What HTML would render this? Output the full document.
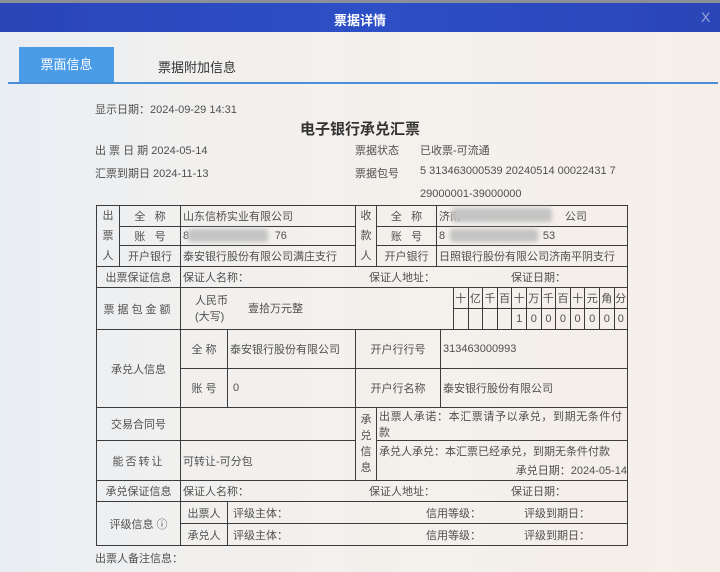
<!DOCTYPE html>
<html><head><meta charset="utf-8">
<style>
*{margin:0;padding:0;box-sizing:border-box}
body{width:720px;height:572px;overflow:hidden;position:relative;font-family:"Liberation Sans","Noto Sans CJK SC",sans-serif;font-size:11px;color:#505050;background:linear-gradient(90deg,#e9eef4 0%,#f2f0ee 30%,#f6efe9 100%)}
.a{position:absolute;white-space:nowrap}
.c{position:absolute;border:1px solid #3c3c3c;display:flex;align-items:center;white-space:nowrap;padding-left:2px}
.m{justify-content:center;padding-left:0}
.b{position:absolute;background:#c4c4c4;filter:blur(2px);border-radius:3px}
</style></head><body>
<div class="a" style="left:0;top:0;width:720px;height:3px;background:#8a8f9a"></div>
<div class="a" style="left:0;top:3px;width:720px;height:29px;background:linear-gradient(90deg,#2a45b8,#2d4fc6,#2a45b8)"></div>
<div class="a" style="left:0;top:10px;width:720px;text-align:center;color:#fff;font-weight:bold;font-size:13px">票据详情</div>
<div class="a" style="left:701px;top:9px;color:#9aa6d8;font-size:14px">X</div>

<div class="a" style="left:19px;top:47px;width:95px;height:35px;background:#4a9ce6;color:#fff;font-size:13px;text-align:center;line-height:35px">票面信息</div>
<div class="a" style="left:158px;top:57px;font-size:13px;color:#333">票据附加信息</div>
<div class="a" style="left:8px;top:82px;width:710px;height:2px;background:#4a8fd8"></div>

<div class="a" style="left:95px;top:101px">显示日期：2024-09-29 14:31</div>
<div class="a" style="left:0;top:118px;width:720px;text-align:center;font-size:15px;font-weight:bold;color:#333">电子银行承兑汇票</div>
<div class="a" style="left:95px;top:142px">出 票 日 期 2024-05-14</div>
<div class="a" style="left:95px;top:165px">汇票到期日 2024-11-13</div>
<div class="a" style="left:355px;top:142px">票据状态</div>
<div class="a" style="left:420px;top:142px">已收票-可流通</div>
<div class="a" style="left:355px;top:165px">票据包号</div>
<div class="a" style="left:420px;top:165px">5 313463000539 20240514 00022431 7</div>
<div class="a" style="left:420px;top:188px">29000001-39000000</div>

<div class="c m" style="left:96px;top:205px;width:24px;height:62px;flex-direction:column;line-height:20px">出<br>票<br>人</div>
<div class="c m" style="left:119px;top:205px;width:62px;height:22px">全&nbsp;&nbsp;&nbsp;称</div>
<div class="c m" style="left:119px;top:226px;width:62px;height:20px">账&nbsp;&nbsp;&nbsp;号</div>
<div class="c m" style="left:119px;top:245px;width:62px;height:22px">开户银行</div>
<div class="c" style="left:180px;top:205px;width:176px;height:22px">山东信桥实业有限公司</div>
<div class="c" style="left:180px;top:226px;width:176px;height:20px">8&nbsp;&nbsp;&nbsp;&nbsp;&nbsp;&nbsp;&nbsp;&nbsp;&nbsp;&nbsp;&nbsp;&nbsp;&nbsp;&nbsp;&nbsp;&nbsp;&nbsp;&nbsp;&nbsp;&nbsp;&nbsp;&nbsp;&nbsp;&nbsp;&nbsp;&nbsp;&nbsp;&nbsp;76</div>
<div class="c" style="left:180px;top:245px;width:176px;height:22px">泰安银行股份有限公司满庄支行</div>
<div class="c m" style="left:355px;top:205px;width:22px;height:62px;flex-direction:column;line-height:20px">收<br>款<br>人</div>
<div class="c m" style="left:376px;top:205px;width:61px;height:22px">全&nbsp;&nbsp;&nbsp;称</div>
<div class="c m" style="left:376px;top:226px;width:61px;height:20px">账&nbsp;&nbsp;&nbsp;号</div>
<div class="c m" style="left:376px;top:245px;width:61px;height:22px">开户银行</div>
<div class="c" style="left:436px;top:205px;width:192px;height:22px">济南&nbsp;&nbsp;&nbsp;&nbsp;&nbsp;&nbsp;&nbsp;&nbsp;&nbsp;&nbsp;&nbsp;&nbsp;&nbsp;&nbsp;&nbsp;&nbsp;&nbsp;&nbsp;&nbsp;&nbsp;&nbsp;&nbsp;&nbsp;&nbsp;&nbsp;&nbsp;&nbsp;&nbsp;&nbsp;&nbsp;&nbsp;&nbsp;&nbsp;&nbsp;公司</div>
<div class="c" style="left:436px;top:226px;width:192px;height:20px">8&nbsp;&nbsp;&nbsp;&nbsp;&nbsp;&nbsp;&nbsp;&nbsp;&nbsp;&nbsp;&nbsp;&nbsp;&nbsp;&nbsp;&nbsp;&nbsp;&nbsp;&nbsp;&nbsp;&nbsp;&nbsp;&nbsp;&nbsp;&nbsp;&nbsp;&nbsp;&nbsp;&nbsp;&nbsp;&nbsp;&nbsp;&nbsp;53</div>
<div class="c" style="left:436px;top:245px;width:192px;height:22px">日照银行股份有限公司济南平阴支行</div>
<div class="b" style="left:188px;top:229px;width:80px;height:13px"></div>
<div class="b" style="left:452px;top:208px;width:100px;height:14px"></div>
<div class="b" style="left:450px;top:229px;width:88px;height:13px"></div>

<div class="c m" style="left:96px;top:266px;width:85px;height:22px">出票保证信息</div>
<div class="c" style="left:180px;top:266px;width:448px;height:22px">保证人名称：<span style="position:absolute;left:188px">保证人地址：</span><span style="position:absolute;left:330px">保证日期：</span></div>

<div class="c m" style="left:96px;top:287px;width:85px;height:43px;letter-spacing:3px">票据包金额</div>
<div class="c" style="left:180px;top:287px;width:274px;height:43px;padding-left:14px;line-height:16px"><div>人民币<br>(大写)</div><div style="margin-left:20px">壹拾万元整</div></div>
<div id="dg"></div>

<div class="c m" style="left:96px;top:329px;width:85px;height:79px">承兑人信息</div>
<div class="c m" style="left:180px;top:329px;width:48px;height:40px">全 称</div>
<div class="c m" style="left:180px;top:368px;width:48px;height:40px">账 号</div>
<div class="c" style="left:227px;top:329px;width:129px;height:40px">泰安银行股份有限公司</div>
<div class="c" style="left:227px;top:368px;width:129px;height:40px">&nbsp;0</div>
<div class="c m" style="left:355px;top:329px;width:86px;height:40px">开户行行号</div>
<div class="c m" style="left:355px;top:368px;width:86px;height:40px">开户行名称</div>
<div class="c" style="left:440px;top:329px;width:188px;height:40px">313463000993</div>
<div class="c" style="left:440px;top:368px;width:188px;height:40px">泰安银行股份有限公司</div>

<div class="c m" style="left:96px;top:407px;width:85px;height:34px">交易合同号</div>
<div class="c" style="left:180px;top:407px;width:176px;height:34px"></div>
<div class="c m" style="left:96px;top:440px;width:85px;height:41px;letter-spacing:2px">能否转让</div>
<div class="c" style="left:180px;top:440px;width:176px;height:41px">可转让-可分包</div>
<div class="c m" style="left:355px;top:407px;width:22px;height:74px;flex-direction:column;line-height:16px">承<br>兑<br>信<br>息</div>
<div class="c" style="left:376px;top:407px;width:252px;height:34px;align-items:flex-start;padding-top:1px;white-space:normal;line-height:16px;letter-spacing:0.6px;display:block">出票人承诺：本汇票请予以承兑，到期无条件付款</div>
<div class="c" style="left:376px;top:440px;width:252px;height:41px;padding-top:2px;white-space:normal;line-height:19px;display:block">承兑人承兑：本汇票已经承兑，到期无条件付款<div style="text-align:right">承兑日期：2024-05-14</div></div>

<div class="c m" style="left:96px;top:480px;width:85px;height:22px">承兑保证信息</div>
<div class="c" style="left:180px;top:480px;width:448px;height:22px">保证人名称：<span style="position:absolute;left:188px">保证人地址：</span><span style="position:absolute;left:330px">保证日期：</span></div>

<div class="c m" style="left:96px;top:501px;width:85px;height:45px">评级信息 ⓘ</div>
<div class="c m" style="left:180px;top:501px;width:48px;height:23px">出票人</div>
<div class="c m" style="left:180px;top:523px;width:48px;height:23px">承兑人</div>
<div class="c" style="left:227px;top:501px;width:401px;height:23px">&nbsp;评级主体：<span style="position:absolute;left:198px">信用等级：</span><span style="position:absolute;left:296px">评级到期日：</span></div>
<div class="c" style="left:227px;top:523px;width:401px;height:23px">&nbsp;评级主体：<span style="position:absolute;left:198px">信用等级：</span><span style="position:absolute;left:296px">评级到期日：</span></div>

<div class="a" style="left:95px;top:550px">出票人备注信息：</div>

<script>
var u=['十','亿','千','百','十','万','千','百','十','元','角','分'],v=['','','','','1','0','0','0','0','0','0','0'],h='';
for(var i=0;i<12;i++){var x=453+i*14.6;var w=(i==11?628-x:15.6);
h+='<div class="c m" style="left:'+x+'px;top:287px;width:'+w+'px;height:22px;font-size:11px">'+u[i]+'</div>';
h+='<div class="c m" style="left:'+x+'px;top:308px;width:'+w+'px;height:22px">'+v[i]+'</div>';}
document.getElementById('dg').outerHTML=h;
</script>
</body></html>
